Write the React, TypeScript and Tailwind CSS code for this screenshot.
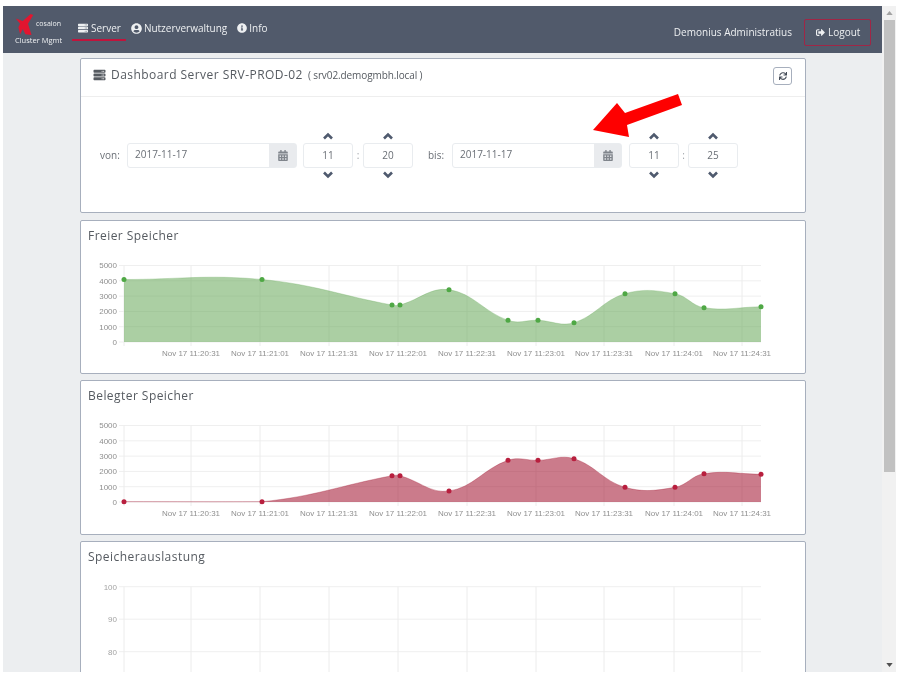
import React from "react";
import {
  FaCalendarAlt,
  FaInfoCircle,
  FaServer,
  FaSignOutAlt,
  FaSync,
  FaUserCircle,
} from "react-icons/fa";

type Point = [number, number];

const timeLabels = [
  { x: 191, text: "Nov 17 11:20:31" },
  { x: 260, text: "Nov 17 11:21:01" },
  { x: 329, text: "Nov 17 11:21:31" },
  { x: 398, text: "Nov 17 11:22:01" },
  { x: 467, text: "Nov 17 11:22:31" },
  { x: 536, text: "Nov 17 11:23:01" },
  { x: 604, text: "Nov 17 11:23:31" },
  { x: 674, text: "Nov 17 11:24:01" },
  { x: 742, text: "Nov 17 11:24:31" },
];

// y values are page coordinates of the first chart card
const freeMemory: Point[] = [
  [124, 279.5], [262, 279.5], [392, 305], [400, 305], [449, 289.7], [508, 320.3],
  [538, 320.3], [574, 322.7], [625, 293.7], [675, 293.7], [704, 307.7], [761, 306.7],
];

const usedMemory: Point[] = [
  [124, 341.7], [262, 341.7], [392, 315.7], [400, 315.7], [449, 331], [508, 300.3],
  [538, 300.3], [574, 298.7], [625, 327.3], [675, 327.3], [704, 313.7], [761, 314.3],
];

const BASE_Y = 342;

// same spline chart.js uses for line tension, capped at the chart floor
function splinePath(points: Point[], tension = 0.4) {
  const ctrl = points.map((p, i) => {
    const prev = points[i - 1] ?? p;
    const next = points[i + 1] ?? p;
    const d01 = Math.hypot(p[0] - prev[0], p[1] - prev[1]);
    const d12 = Math.hypot(next[0] - p[0], next[1] - p[1]);
    const total = d01 + d12 || 1;
    const fa = (tension * d01) / total;
    const fb = (tension * d12) / total;
    return {
      before: [p[0] - fa * (next[0] - prev[0]), Math.min(p[1] - fa * (next[1] - prev[1]), BASE_Y)],
      after: [p[0] + fb * (next[0] - prev[0]), Math.min(p[1] + fb * (next[1] - prev[1]), BASE_Y)],
    };
  });
  let d = `M${points[0][0]} ${points[0][1]}`;
  for (let i = 1; i < points.length; i++) {
    const a = ctrl[i - 1].after;
    const b = ctrl[i].before;
    d += ` C${a[0]} ${a[1]} ${b[0]} ${b[1]} ${points[i][0]} ${points[i][1]}`;
  }
  return d;
}

function AreaChart({ data, fill, dot }: { data: Point[]; fill: string; dot: string }) {
  const curve = splinePath(data);
  return (
    <svg viewBox="81 250 724 123" className="block w-[724px] h-[123px] font-['Liberation_Sans',sans-serif]">
      {[5000, 4000, 3000, 2000, 1000, 0].map((v, i) => {
        const y = 265.5 + i * 15.3;
        return (
          <g key={v}>
            <line x1={119} x2={761} y1={y} y2={y} stroke="#efefef" />
            <text x={117} y={y + 2.8} textAnchor="end" fontSize={8} fill="#8f8f8f">
              {v}
            </text>
          </g>
        );
      })}
      {[124, ...timeLabels.map((t) => t.x)].map((x) => (
        <line key={x} x1={x} x2={x} y1={265.5} y2={346} stroke="#ececec" />
      ))}
      <path d={`${curve} L761 ${BASE_Y} L124 ${BASE_Y} Z`} fill={fill} fillOpacity={0.55} />
      <path d={curve} fill="none" stroke={fill} strokeOpacity={0.3} />
      {data.map((p) => (
        <circle key={p[0]} cx={p[0]} cy={p[1]} r={2.5} fill={dot} />
      ))}
      {timeLabels.map((t) => (
        <text key={t.x} x={t.x} y={356} textAnchor="middle" fontSize={8} fill="#8f8f8f">
          {t.text}
        </text>
      ))}
    </svg>
  );
}

function UsageChart() {
  return (
    <svg viewBox="81 571 724 101" className="block w-[724px] h-[101px] font-['Liberation_Sans',sans-serif]">
      {[100, 90, 80].map((v, i) => {
        const y = 586.7 + i * 32.5;
        return (
          <g key={v}>
            <line x1={119} x2={761} y1={y} y2={y} stroke="#efefef" />
            <text x={117} y={y + 2.8} textAnchor="end" fontSize={8} fill="#a3a3a3">
              {v}
            </text>
          </g>
        );
      })}
      {[124, ...timeLabels.map((t) => t.x)].map((x) => (
        <line key={x} x1={x} x2={x} y1={586.7} y2={672} stroke="#ececec" />
      ))}
    </svg>
  );
}

function NavItem({ icon, label, active }: { icon: React.ReactNode; label: string; active?: boolean }) {
  return (
    <div
      className={`flex items-center gap-[2px] h-[25px] pt-[1px] px-[5px] border-b-2 ${
        active ? "border-[#c0143c]" : "border-transparent"
      }`}
    >
      {icon}
      <span className="text-[10px] font-medium">{label}</span>
    </div>
  );
}

function Chevron({ points }: { points: string }) {
  return (
    <svg viewBox="0 0 10 8" className="w-[10px] h-[8px]">
      <polyline points={points} fill="none" stroke="currentColor" strokeWidth={2.6} />
    </svg>
  );
}

function DateField({ value }: { value: string }) {
  return (
    <div className="flex w-[170px] h-[25px] border border-[#e9ecef] rounded-[3px]">
      <div className="flex-1 pl-[7px] text-[10px] text-[#6a6f76] leading-[21px]">{value}</div>
      <div className="flex items-center justify-center w-[27px] bg-[#e9ebee] text-[#80858c]">
        <FaCalendarAlt className="w-[10px] h-[11px]" />
      </div>
    </div>
  );
}

function TimeField({ value }: { value: string }) {
  return (
    <div className="flex flex-col items-center w-[50px] gap-[3px] text-[#4f5a6e]">
      <Chevron points="1,6.5 5,2.5 9,6.5" />
      <div className="w-full h-[25px] border border-[#e9ecef] rounded-[3px] text-center text-[10px] leading-[22px] text-[#6a6f76]">
        {value}
      </div>
      <Chevron points="1,1.5 5,5.5 9,1.5" />
    </div>
  );
}

function Card({ className, children }: { className: string; children: React.ReactNode }) {
  return (
    <div className={`shrink-0 bg-white border border-[#a7afbd] rounded-[2px] ${className}`}>{children}</div>
  );
}

function CardTitle({ children }: { children: React.ReactNode }) {
  return (
    <div className="h-[29px] pl-[7px] pt-[6px] text-[12px] tracking-[0.45px] text-[#555a60] leading-[18px]">
      {children}
    </div>
  );
}

export default function App() {
  return (
    <div className="relative flex w-[900px] h-[679px] overflow-hidden bg-white pt-[6px] pl-[3px] pb-[7px] pr-[4px] font-['Open_Sans',sans-serif] blur-[0.6px]">
      <div className="flex flex-col w-[879px]">
        <header className="flex shrink-0 h-[47px] bg-[#515a6b] text-[#eef0f2]">
          <div className="relative w-[69px] shrink-0">
            <svg viewBox="0 0 20 24" className="absolute left-[12px] top-[8px] w-[19px] h-[21px]">
              <path d="M0 5 L8 8 L17 0 L20 1 L14 11 L18 24 L11 23 L8 17 L5 23 L3 15 L5 11 Z" fill="#e2152f" />
            </svg>
            <span className="absolute left-[33px] top-[13px] text-[7px] leading-[10px]">cosaion</span>
            <span className="absolute left-[12px] top-[29px] text-[7.5px] leading-[10px] whitespace-nowrap">
              Cluster Mgmt
            </span>
          </div>
          <nav className="flex items-start pt-[10px]">
            <NavItem icon={<FaServer className="w-[12px] h-[10px]" />} label="Server" active />
            <NavItem icon={<FaUserCircle className="w-[11px] h-[11px]" />} label="Nutzerverwaltung" />
            <NavItem icon={<FaInfoCircle className="w-[10px] h-[10px]" />} label="Info" />
          </nav>
          <div className="flex items-center ml-auto pt-[6px] pr-[11px]">
            <span className="text-[10px] font-medium mr-[12px] whitespace-nowrap">Demonius Administratius</span>
            <div className="flex items-center gap-[3px] w-[67px] h-[27px] pl-[11px] border border-[#a02646] rounded-[2px]">
              <FaSignOutAlt className="w-[9px] h-[9px]" />
              <span className="text-[10px] font-medium">Logout</span>
            </div>
          </div>
        </header>

        <main className="flex-1 min-h-0 overflow-hidden bg-[#eceef0] pt-[5px] pl-[77px]">
          <div className="flex flex-col gap-[6px] w-[726px]">
            <Card className="h-[155px] mb-[1px]">
              <div className="flex items-center justify-between h-[38px] pl-[12px] pr-[13px] pb-[4px] border-b border-[#eeeeee]">
                <div className="flex items-center gap-[5px] mb-[1px] text-[#555a60] whitespace-nowrap">
                  <FaServer className="w-[13px] h-[12px]" />
                  <span className="text-[12px] tracking-[0.45px]">Dashboard Server SRV-PROD-02</span>
                  <span className="text-[10px] tracking-[-0.1px]">( srv02.demogmbh.local )</span>
                </div>
                <div className="flex items-center justify-center w-[19px] h-[18px] border border-[#a7afbd] rounded-[3px] text-[#444b57]">
                  <FaSync className="w-[8px] h-[8px]" />
                </div>
              </div>
              <div className="flex items-center h-[115px] pt-[2px] pl-[19px] text-[10px] text-[#6a6f76]">
                <span className="w-[27px]">von:</span>
                <DateField value="2017-11-17" />
                <div className="w-[6px]" />
                <TimeField value="11" />
                <span className="w-[10px] text-center text-[#a0a4aa]">:</span>
                <TimeField value="20" />
                <span className="ml-[15px] w-[24px]">bis:</span>
                <DateField value="2017-11-17" />
                <div className="w-[7px]" />
                <TimeField value="11" />
                <span className="w-[9px] text-center text-[#a0a4aa]">:</span>
                <TimeField value="25" />
              </div>
            </Card>

            <Card className="h-[154px]">
              <CardTitle>Freier Speicher</CardTitle>
              <AreaChart data={freeMemory} fill="#66a858" dot="#4fa845" />
            </Card>

            <Card className="h-[155px]">
              <CardTitle>Belegter Speicher</CardTitle>
              <AreaChart data={usedMemory} fill="#a00f2c" dot="#b81f3e" />
            </Card>

            <Card className="h-[160px]">
              <CardTitle>Speicherauslastung</CardTitle>
              <UsageChart />
            </Card>
          </div>
        </main>
      </div>

      <div className="flex flex-col items-center w-[14px] bg-[#f1f1f1] text-[#505050]">
        <div className="flex items-center justify-center h-[14px] text-[#a3a3a3]">
          <svg viewBox="0 0 8 5" className="w-[7px] h-[4px]">
            <path d="M4 0 L8 5 L0 5 Z" fill="currentColor" />
          </svg>
        </div>
        <div className="w-[11px] h-[452px] bg-[#c1c1c1]" />
        <div className="flex-1" />
        <div className="flex items-center justify-center h-[14px]">
          <svg viewBox="0 0 8 5" className="w-[7px] h-[4px]">
            <path d="M0 0 L8 0 L4 5 Z" fill="currentColor" />
          </svg>
        </div>
      </div>

      <svg viewBox="590 90 95 50" className="absolute left-[590px] top-[90px] w-[95px] h-[50px]">
        <path d="M593 130 L617 103 L625 113 L678 94 L682 105 L627 125 L629 137 Z" fill="#fe0000" />
      </svg>
    </div>
  );
}
